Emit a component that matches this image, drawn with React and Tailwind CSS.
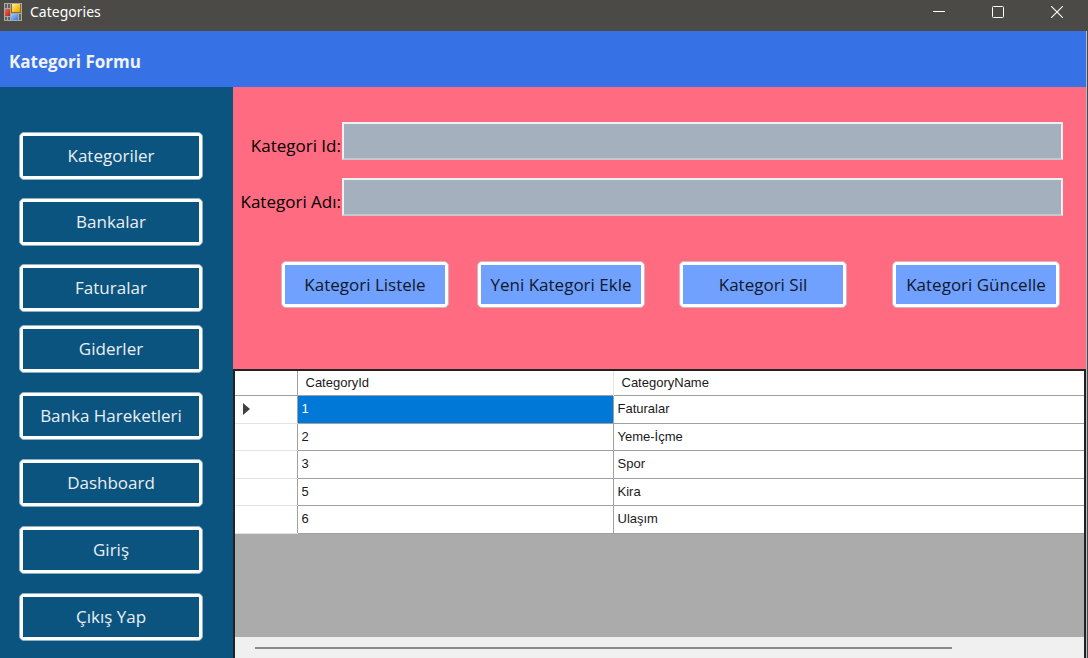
import { useState } from "react";

const navGroups = [
  ["Kategoriler", "Bankalar", "Faturalar"],
  ["Giderler", "Banka Hareketleri", "Dashboard", "Giriş", "Çıkış Yap"],
];

const rows = [
  { id: 1, name: "Faturalar" },
  { id: 2, name: "Yeme-İçme" },
  { id: 3, name: "Spor" },
  { id: 5, name: "Kira" },
  { id: 6, name: "Ulaşım" },
];

function AppIcon() {
  return (
    <svg width="18" height="18" viewBox="0 0 18 18" aria-hidden="true">
      <defs>
        <linearGradient id="gold" x1="0" y1="0" x2="1" y2="1">
          <stop offset="0" stopColor="#fff0a8" />
          <stop offset="0.5" stopColor="#fbc92c" />
          <stop offset="1" stopColor="#e3a208" />
        </linearGradient>
        <linearGradient id="red" x1="0" y1="0" x2="1" y2="1">
          <stop offset="0" stopColor="#e8705a" />
          <stop offset="1" stopColor="#b81d10" />
        </linearGradient>
        <linearGradient id="blue" x1="0" y1="0" x2="1" y2="1">
          <stop offset="0" stopColor="#9cc8ff" />
          <stop offset="1" stopColor="#3b78e0" />
        </linearGradient>
      </defs>
      <rect width="18" height="18" fill="#a9a9a7" />
      <rect x="1" y="1" width="5" height="4" fill="#62625f" />
      <rect x="1" y="14" width="5" height="3" fill="#62625f" />
      <rect x="3" y="1" width="1" height="16" fill="#a9a9a7" />
      <rect x="7" y="1" width="10" height="9" fill="#8a6a1c" />
      <rect x="8" y="1" width="8" height="8" fill="url(#gold)" />
      <rect x="1" y="6" width="5" height="7" fill="url(#red)" />
      <rect x="7" y="11" width="7" height="6" fill="url(#blue)" />
      <rect x="15" y="11" width="2" height="6" fill="#62625f" />
    </svg>
  );
}

function TitleBar() {
  return (
    <header className="flex h-[31px] items-start bg-[#4b4a47] text-white">
      <div className="flex h-6 flex-1 items-center gap-2 pl-1 font-['Noto_Sans',sans-serif] text-sm">
        <AppIcon />
        <span>Categories</span>
      </div>
      <div className="flex h-6 gap-[13px] pr-2">
        <button aria-label="Minimize" className="flex w-[46px] items-center justify-center">
          <svg width="12" height="12" viewBox="0 0 12 12">
            <path d="M0 5.5h12" stroke="white" />
          </svg>
        </button>
        <button aria-label="Maximize" className="flex w-[46px] items-center justify-center">
          <svg width="12" height="12" viewBox="0 0 12 12">
            <rect x="0.5" y="0.5" width="11" height="11" rx="1" fill="none" stroke="white" />
          </svg>
        </button>
        <button aria-label="Close" className="flex w-[46px] items-center justify-center">
          <svg width="12" height="12" viewBox="0 0 12 12">
            <path d="M0 0l12 12M12 0L0 12" stroke="white" strokeWidth="1.1" />
          </svg>
        </button>
      </div>
    </header>
  );
}

function Sidebar() {
  return (
    <nav className="flex w-[233px] shrink-0 flex-col gap-[13px] bg-[#0b547f] pt-[45px] pr-[30px] pb-4 pl-[19px]">
      {navGroups.map((group, i) => (
        <div key={i} className={i === 0 ? "flex flex-col gap-[18px]" : "flex flex-col gap-[19px]"}>
          {group.map((label) => (
            <button
              key={label}
              className="h-12 rounded-[5px] border border-[#8fb0c2] bg-white p-[3px] text-[17px] text-[#e9eff3]"
            >
              <span className="flex h-full items-center justify-center bg-[#0b547f]">{label}</span>
            </button>
          ))}
        </div>
      ))}
    </nav>
  );
}

function Field({ id, label }) {
  return (
    <div className="flex items-end gap-px">
      <label htmlFor={id} className="w-[108px] shrink-0 pb-1 text-right text-[17px] leading-5 whitespace-nowrap">
        {label}
      </label>
      <input
        id={id}
        type="text"
        className="h-[38px] min-w-0 flex-1 border-2 border-[#f0f0f0] border-b-[#c4c8cc] bg-[#a4b0be] px-2 text-[17px] outline-none"
      />
    </div>
  );
}

function ActionButton({ children }) {
  return (
    <button className="h-[47px] w-[168px] rounded-[5px] border border-[#d5b5bd] bg-white p-[3px] text-[17px] text-[#10182c]">
      <span className="flex h-full items-center justify-center bg-[#70a1ff] whitespace-nowrap">{children}</span>
    </button>
  );
}

function CategoryForm() {
  return (
    <form className="h-[282px] bg-[#ff6b81] pt-[35px] text-black" onSubmit={(e) => e.preventDefault()}>
      <div className="flex flex-col gap-[18px] pr-[23px]">
        <Field id="category-id" label="Kategori Id:" />
        <Field id="category-name" label="Kategori Adı:" />
      </div>
      <div className="flex justify-between pt-[45px] pr-[26px] pl-12">
        <div className="flex gap-7">
          <ActionButton>Kategori Listele</ActionButton>
          <ActionButton>Yeni Kategori Ekle</ActionButton>
        </div>
        <div className="flex gap-[45px]">
          <ActionButton>Kategori Sil</ActionButton>
          <ActionButton>Kategori Güncelle</ActionButton>
        </div>
      </div>
    </form>
  );
}

function CategoryGrid() {
  const [selected, setSelected] = useState(1);
  return (
    <section className="flex flex-1 flex-col border-t-2 border-r-2 border-l-2 border-[#222] bg-[#ababab]">
      <table className="w-full table-fixed border-collapse bg-white font-['Liberation_Sans',sans-serif] text-[13px] leading-5 text-[#1a1a1a]">
        <colgroup>
          <col className="w-[62px]" />
          <col className="w-[316px]" />
          <col />
        </colgroup>
        <thead>
          <tr className="h-6 border-b border-[#a0a0a0]">
            <th className="border-r border-[#a0a0a0] p-0" aria-label="Row" />
            <th className="border-r border-[#e3e3e3] px-2 py-0 text-left font-normal">CategoryId</th>
            <th className="px-2 py-0 text-left font-normal">CategoryName</th>
          </tr>
        </thead>
        <tbody>
          {rows.map((row) => {
            const active = row.id === selected;
            return (
              <tr key={row.id} className="odd:h-7 even:h-[27px]" onClick={() => setSelected(row.id)}>
                <th className="border-r border-b border-r-[#a0a0a0] border-b-[#e3e3e3] py-0 pr-0 pl-2">
                  {active && (
                    <svg width="7" height="12" viewBox="0 0 7 12" aria-hidden="true" className="block">
                      <path d="M0 0l7 6-7 6z" fill="#404040" />
                    </svg>
                  )}
                </th>
                <td
                  className={
                    active
                      ? "border-r border-b border-[#a0a0a0] bg-[#0078d7] px-1 py-0 text-white"
                      : "border-r border-b border-[#a0a0a0] px-1 py-0"
                  }
                >
                  {row.id}
                </td>
                <td className="border-b border-[#a0a0a0] px-1 py-0">{row.name}</td>
              </tr>
            );
          })}
        </tbody>
      </table>
      <div className="mt-auto h-[21px] bg-[#f0f0f0] pt-[10px] pr-[132px] pl-5">
        <div className="h-[2px] bg-[#8a8a8a]" />
      </div>
    </section>
  );
}

export default function App() {
  return (
    <div className="flex min-h-screen flex-col bg-[#4b4a47] font-['Open_Sans',sans-serif]">
      <TitleBar />
      <div className="mr-px flex flex-1 flex-col border-r border-[#b9b9c4]">
        <h1 className="flex h-14 items-center bg-[#3672e5] pt-[6px] pl-[9px] text-[17px] font-bold text-[#f1f2f6]">
          Kategori Formu
        </h1>
        <div className="flex flex-1">
          <Sidebar />
          <main className="flex min-w-0 flex-1 flex-col">
            <CategoryForm />
            <CategoryGrid />
          </main>
        </div>
      </div>
    </div>
  );
}
